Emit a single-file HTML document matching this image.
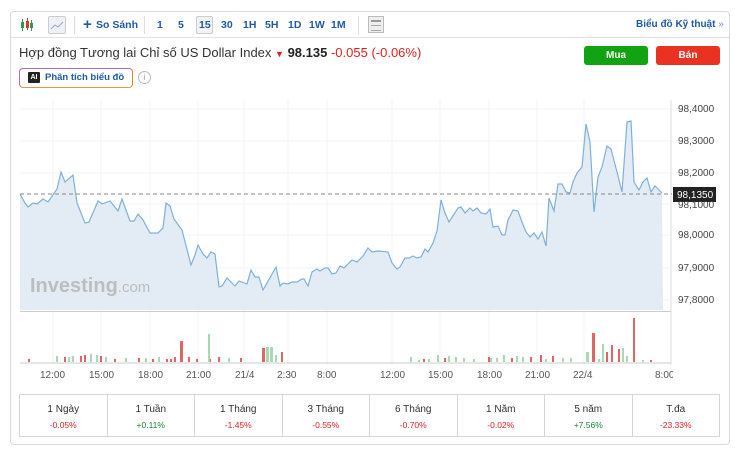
<!DOCTYPE html>
<html><head><meta charset="utf-8"><style>
*{box-sizing:border-box;margin:0;padding:0}
body{width:738px;height:452px;background:#fff;font-family:"Liberation Sans",sans-serif;position:relative;overflow:hidden;color:#333}
.card{position:absolute;left:10px;top:11px;width:720px;height:434px;border:1px solid #dadada;border-radius:4px}
.tb{position:absolute;left:0;top:0;width:718px;height:26px;border-bottom:1px solid #e2e2e2}
.t{position:absolute;top:7px;font-size:10.5px;font-weight:bold;color:#1e5aa8}
.sep{position:absolute;top:4px;width:1px;height:18px;background:#ddd}
.title{position:absolute;left:19px;top:45px;font-size:13px;color:#333;white-space:nowrap}
.btn{position:absolute;top:46px;width:64px;height:19px;border-radius:3px;color:#fff;font-size:10px;font-weight:bold;text-align:center;line-height:19px}
.ai{position:absolute;left:19px;top:68px;width:114px;height:20px;border-radius:4px;border:1px solid #b06ad8;border-right-color:#f08020;border-bottom-color:#f09040}
.tbl{position:absolute;left:19px;top:394px;width:701px;height:43px;border:1px solid #d5d5d5;display:flex}
.tbl div{flex:1;border-right:1px solid #d5d5d5;text-align:center;font-size:10px;padding-top:9px;color:#333}
.tbl div:last-child{border-right:none}
.tbl b{display:block;font-weight:normal;font-size:8.5px;margin-top:5px}
.r{color:#e02020}.g{color:#118a2e}
.ax{position:absolute;top:370px;font-size:10px;color:#555}
.yl{position:absolute;left:678px;font-size:10px;color:#444}
</style></head><body>
<div class="card">
 <div class="tb">
  <svg style="position:absolute;left:9px;top:6px" width="14" height="14"><rect x="1" y="4" width="3" height="6" fill="#2a9d4a"/><line x1="2.5" y1="1" x2="2.5" y2="13" stroke="#2a9d4a"/><rect x="6" y="3" width="3" height="7" fill="#d33"/><line x1="7.5" y1="0" x2="7.5" y2="12" stroke="#d33"/><rect x="10" y="5" width="3" height="5" fill="#2a9d4a"/><line x1="11.5" y1="2" x2="11.5" y2="13" stroke="#2a9d4a"/></svg>
  <div style="position:absolute;left:37px;top:4px;width:18px;height:18px;border:1px solid #ccc;border-radius:2px;background:#eef2f8"><svg width="16" height="16"><polyline points="2,12 6,8 9,10 14,5" fill="none" stroke="#9ab" stroke-width="1"/></svg></div>
  <div class="sep" style="left:63px"></div>
  <div class="t" style="left:72px;top:4px;font-size:15px">+</div><div class="t" style="left:85px">So Sánh</div>
  <div class="sep" style="left:133px"></div>
  <div class="t" style="left:146px">1</div><div class="t" style="left:167px">5</div>
  <div style="position:absolute;left:185px;top:4px;width:17px;height:18px;border:1px solid #ccc;border-radius:2px;background:#f3f3f3"></div>
  <div class="t" style="left:188px">15</div><div class="t" style="left:210px">30</div><div class="t" style="left:232px">1H</div><div class="t" style="left:254px">5H</div><div class="t" style="left:277px">1D</div><div class="t" style="left:298px">1W</div><div class="t" style="left:320px">1M</div>
  <div class="sep" style="left:347px"></div>
  <div style="position:absolute;left:357px;top:4px;width:16px;height:17px;border:1px solid #bbb;background:#eee"><div style="margin:3px 2px;height:2px;background:#999"></div><div style="margin:2px 2px;height:6px;border-top:1px solid #aaa;border-bottom:1px solid #aaa"></div></div>
  <div class="t" style="left:625px;font-size:10px">Biểu đồ Kỹ thuật <span style="font-weight:normal;color:#6a8fc8">»</span></div>
 </div>
</div>
<div class="title">Hợp đồng Tương lai Chỉ số US Dollar Index <span style="color:#e02020;font-size:9px">&#9660;</span> <b style="color:#222">98.135</b> <span class="r">-0.055 (-0.06%)</span></div>
<div class="btn" style="left:584px;background:#12a312">Mua</div>
<div class="btn" style="left:656px;background:#ea3222">Bán</div>
<div class="ai"><div style="position:absolute;left:8px;top:3px;width:12px;height:11px;background:#222;color:#fff;font-size:7px;font-weight:bold;text-align:center;line-height:11px;border-radius:1px">AI</div><div style="position:absolute;left:25px;top:3px;font-size:9.5px;font-weight:bold;color:#1e5aa8;white-space:nowrap">Phân tích biểu đồ</div></div>
<div style="position:absolute;left:138px;top:71px;width:13px;height:13px;border:1px solid #bbb;border-radius:50%;font-size:9px;color:#aaa;text-align:center;line-height:11px">i</div>

<svg style="position:absolute;left:0;top:0" width="738" height="452">
 <g stroke="#f3f3f3" stroke-width="1">
  <line x1="20" y1="109" x2="670" y2="109"/><line x1="20" y1="141" x2="670" y2="141"/><line x1="20" y1="173" x2="670" y2="173"/><line x1="20" y1="204" x2="670" y2="204"/><line x1="20" y1="235" x2="670" y2="235"/><line x1="20" y1="268" x2="670" y2="268"/><line x1="20" y1="300" x2="670" y2="300"/>
  <line x1="53" y1="100" x2="53" y2="365"/><line x1="101" y1="100" x2="101" y2="365"/><line x1="150" y1="100" x2="150" y2="365"/><line x1="198" y1="100" x2="198" y2="365"/><line x1="244" y1="100" x2="244" y2="365"/><line x1="288" y1="100" x2="288" y2="365"/><line x1="327" y1="100" x2="327" y2="365"/><line x1="392" y1="100" x2="392" y2="365"/><line x1="440" y1="100" x2="440" y2="365"/><line x1="489" y1="100" x2="489" y2="365"/><line x1="537" y1="100" x2="537" y2="365"/><line x1="584" y1="100" x2="584" y2="365"/>
 </g>
 <line x1="671" y1="100" x2="671" y2="365" stroke="#ddd"/>
 <polygon fill="#e3ecf4" points="20,310 20,194 25,203 28,207 33,203 37,204 43,199 48,202 57,189 61,172 65,182 73,175 77,203 85,223 89,222 98,201 102,204 110,201 118,211 122,199 130,221 134,221 138,214 143,220 150,233 158,233 163,228 166,203 170,206 174,219 182,230 191,265 195,255 198,245 203,254 207,258 211,252 215,254 219,287 222,286 227,278 235,286 239,281 247,284 251,270 255,277 259,277 263,290 276,267 280,286 283,283 288,284 292,282 297,282 302,279 304,279 308,286 312,272 317,269 320,271 325,268 328,268 332,274 336,273 340,266 344,268 352,260 357,262 363,256 368,248 372,252 378,251 388,252 392,263 397,269 400,267 405,258 409,258 413,256 417,258 421,257 425,249 428,252 433,243 437,231 441,200 445,213 449,222 458,208 461,207 465,213 470,208 473,211 477,208 481,213 486,214 490,209 493,227 498,226 502,235 505,235 508,220 513,210 518,211 522,222 526,232 530,237 534,233 538,239 542,232 546,246 549,198 554,211 558,184 562,184 566,192 570,193 573,182 577,173 582,167 586,124 590,142 594,212 598,177 602,167 607,146 611,149 617,172 622,192 627,122 631,121 634,182 639,190 643,182 647,178 651,192 655,186 658,189 662,193 663,310"/>
 <polyline fill="none" stroke="#7fb0dc" stroke-width="1.2" points="20,194 25,203 28,207 33,203 37,204 43,199 48,202 57,189 61,172 65,182 73,175 77,203 85,223 89,222 98,201 102,204 110,201 118,211 122,199 130,221 134,221 138,214 143,220 150,233 158,233 163,228 166,203 170,206 174,219 182,230 191,265 195,255 198,245 203,254 207,258 211,252 215,254 219,287 222,286 227,278 235,286 239,281 247,284 251,270 255,277 259,277 263,290 276,267 280,286 283,283 288,284 292,282 297,282 302,279 304,279 308,286 312,272 317,269 320,271 325,268 328,268 332,274 336,273 340,266 344,268 352,260 357,262 363,256 368,248 372,252 378,251 388,252 392,263 397,269 400,267 405,258 409,258 413,256 417,258 421,257 425,249 428,252 433,243 437,231 441,200 445,213 449,222 458,208 461,207 465,213 470,208 473,211 477,208 481,213 486,214 490,209 493,227 498,226 502,235 505,235 508,220 513,210 518,211 522,222 526,232 530,237 534,233 538,239 542,232 546,246 549,198 554,211 558,184 562,184 566,192 570,193 573,182 577,173 582,167 586,124 590,142 594,212 598,177 602,167 607,146 611,149 617,172 622,192 627,122 631,121 634,182 639,190 643,182 647,178 651,192 655,186 658,189 662,193"/>
 <line x1="20" y1="194" x2="672" y2="194" stroke="#888" stroke-dasharray="4,3"/>
 <line x1="20" y1="311.5" x2="671" y2="311.5" stroke="#ccc"/>
 <line x1="20" y1="363" x2="671" y2="363" stroke="#ccc"/>
 <g fill="#e06666">
  <rect x="28" y="359" width="2" height="3"/><rect x="64" y="357" width="2" height="5"/><rect x="80" y="356" width="2" height="6"/><rect x="84" y="355" width="2" height="7"/><rect x="100" y="356" width="2" height="6"/><rect x="114" y="359" width="2" height="3"/><rect x="138" y="358" width="2" height="4"/><rect x="152" y="359" width="2" height="3"/><rect x="166" y="359" width="2" height="3"/><rect x="170" y="359" width="2" height="3"/><rect x="174" y="357" width="2" height="5"/><rect x="180" y="341" width="3" height="21"/><rect x="188" y="357" width="2" height="5"/><rect x="196" y="359" width="2" height="3"/><rect x="209" y="359" width="2" height="3"/><rect x="218" y="357" width="2" height="5"/><rect x="240" y="358" width="2" height="4"/><rect x="262" y="348" width="3" height="14"/><rect x="281" y="352" width="2" height="10"/><rect x="423" y="359" width="2" height="3"/><rect x="444" y="358" width="2" height="4"/><rect x="488" y="357" width="2" height="5"/><rect x="511" y="358" width="2" height="4"/><rect x="530" y="357" width="2" height="5"/><rect x="540" y="355" width="2" height="7"/><rect x="552" y="356" width="2" height="6"/><rect x="592" y="333" width="3" height="29"/><rect x="606" y="352" width="2" height="10"/><rect x="611" y="345" width="2" height="17"/><rect x="618" y="349" width="2" height="13"/><rect x="633" y="318" width="2" height="44"/><rect x="650" y="360" width="2" height="2"/>
 </g>
 <g fill="#a8d8b4">
  <rect x="56" y="356" width="2" height="6"/><rect x="68" y="357" width="2" height="5"/><rect x="72" y="356" width="2" height="6"/><rect x="90" y="354" width="2" height="8"/><rect x="96" y="355" width="2" height="7"/><rect x="105" y="357" width="2" height="5"/><rect x="125" y="358" width="2" height="4"/><rect x="145" y="358" width="2" height="4"/><rect x="158" y="357" width="2" height="5"/><rect x="208" y="334" width="2" height="28"/><rect x="228" y="358" width="2" height="4"/><rect x="266" y="347" width="3" height="15"/><rect x="270" y="347" width="3" height="15"/><rect x="275" y="355" width="2" height="7"/><rect x="410" y="357" width="2" height="5"/><rect x="418" y="360" width="2" height="2"/><rect x="428" y="359" width="2" height="3"/><rect x="437" y="355" width="2" height="7"/><rect x="448" y="356" width="2" height="6"/><rect x="455" y="357" width="2" height="5"/><rect x="463" y="358" width="2" height="4"/><rect x="473" y="359" width="2" height="3"/><rect x="490" y="358" width="2" height="4"/><rect x="496" y="358" width="2" height="4"/><rect x="503" y="355" width="2" height="7"/><rect x="516" y="356" width="2" height="6"/><rect x="522" y="357" width="2" height="5"/><rect x="545" y="359" width="2" height="3"/><rect x="562" y="358" width="2" height="4"/><rect x="570" y="358" width="2" height="4"/><rect x="586" y="352" width="3" height="10"/><rect x="598" y="359" width="2" height="3"/><rect x="602" y="344" width="2" height="18"/><rect x="622" y="348" width="2" height="14"/><rect x="626" y="356" width="2" height="6"/><rect x="642" y="360" width="2" height="2"/>
 </g>
 <text x="30" y="292" font-family="Liberation Sans" font-size="20" font-weight="bold" fill="#bdbdbd">Investing<tspan font-weight="normal" font-size="15">.com</tspan></text>
 <rect x="673" y="187" width="43" height="15" fill="#222"/>
 <text x="677" y="198" font-family="Liberation Sans" font-size="10" fill="#fff">98,1350</text>
</svg>
<div class="yl" style="top:104px">98,4000</div><div class="yl" style="top:136px">98,3000</div><div class="yl" style="top:168px">98,2000</div><div class="yl" style="top:200px">98,1000</div><div class="yl" style="top:230px">98,0000</div><div class="yl" style="top:263px">97,9000</div><div class="yl" style="top:295px">97,8000</div>
<div class="ax" style="left:40px">12:00</div><div class="ax" style="left:89px">15:00</div><div class="ax" style="left:138px">18:00</div><div class="ax" style="left:186px">21:00</div><div class="ax" style="left:235px">21/4</div><div class="ax" style="left:277px">2:30</div><div class="ax" style="left:317px">8:00</div><div class="ax" style="left:380px">12:00</div><div class="ax" style="left:428px">15:00</div><div class="ax" style="left:477px">18:00</div><div class="ax" style="left:525px">21:00</div><div class="ax" style="left:573px">22/4</div><div class="ax" style="left:655px;width:18px;overflow:hidden;white-space:nowrap">8:00</div>
<div class="tbl">
 <div>1 Ngày<b class="r">-0.05%</b></div><div>1 Tuần<b class="g">+0.11%</b></div><div>1 Tháng<b class="r">-1.45%</b></div><div>3 Tháng<b class="r">-0.55%</b></div><div>6 Tháng<b class="r">-0.70%</b></div><div>1 Năm<b class="r">-0.02%</b></div><div>5 năm<b class="g">+7.56%</b></div><div>T.đa<b class="r">-23.33%</b></div>
</div>
</body></html>
